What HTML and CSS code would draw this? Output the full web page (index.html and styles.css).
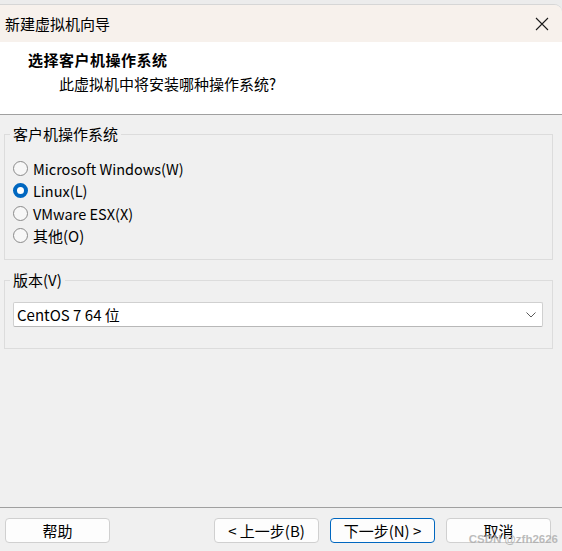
FILE: index.html
```html
<!DOCTYPE html>
<html lang="zh-CN">
<head>
<meta charset="utf-8">
<title>新建虚拟机向导</title>
<link rel="stylesheet" href="styles.css">
</head>
<body>
<div class="window">
  <div class="titlebar">
    <span class="title">新建虚拟机向导</span>
    <svg class="close" width="14" height="14" viewBox="0 0 14 14"><path d="M1 1 L13 13 M13 1 L1 13" stroke="#1b1b1b" stroke-width="1.1" fill="none"/></svg>
  </div>
  <div class="header">
    <div class="h-title">选择客户机操作系统</div>
    <div class="h-sub">此虚拟机中将安装哪种操作系统?</div>
  </div>
  <div class="content">
    <fieldset class="group group-os">
      <legend>客户机操作系统</legend>
      <div class="radio-row"><span class="radio"></span><span class="lat">Microsoft Windows(W)</span></div>
      <div class="radio-row"><span class="radio checked"></span><span class="lat">Linux(L)</span></div>
      <div class="radio-row"><span class="radio"></span><span class="lat">VMware ESX(X)</span></div>
      <div class="radio-row"><span class="radio"></span><span>其他(O)</span></div>
    </fieldset>
    <fieldset class="group group-ver">
      <legend>版本(V)</legend>
      <div class="select">
        <span>CentOS 7 64 位</span>
        <svg width="10" height="6" viewBox="0 0 10 6"><path d="M0.5 0.5 L5 5 L9.5 0.5" stroke="#5a5a5a" stroke-width="1" fill="none"/></svg>
      </div>
    </fieldset>
  </div>
  <div class="footer">
    <div class="btn">帮助</div>
    <div class="spacer"></div>
    <div class="btn">&lt; 上一步(B)</div>
    <div class="btn default">下一步(N) &gt;</div>
    <div class="btn">取消</div>
  </div>
</div>
<div class="watermark">CSDN @zfh2626</div>
</body>
</html>
```
FILE: styles.css
```css
html, body {
  margin: 0;
  padding: 0;
}
body {
  width: 562px;
  height: 551px;
  background: #ececec;
  font-family: "Noto Sans CJK SC", "Noto Sans", sans-serif;
  font-size: 15px;
  color: #000;
  position: relative;
  overflow: hidden;
}
.window {
  margin-top: 4px;
  height: 547px;
  display: flex;
  flex-direction: column;
  background: #f0f0f0;
  border-top-right-radius: 8px;
  overflow: hidden;
  border-top: 1px solid #d6d6d6;
  box-sizing: border-box;
}
.titlebar {
  height: 37px;
  flex: none;
  background: #f7f1ec;
  display: flex;
  align-items: center;
  justify-content: space-between;
  padding: 0 13px 0 5px;
}
.title {
  line-height: 20px;
}
.close {
  display: block;
}
.header {
  flex: none;
  height: 64px;
  padding-top: 8px;
  background: #fff;
  border-bottom: 1px solid #a0a0a0;
}
.h-title {
  padding-left: 28px;
  font-weight: bold;
  line-height: 20px;
  letter-spacing: 0.5px;
}
.h-sub {
  padding-left: 59px;
  margin-top: 4px;
  line-height: 20px;
}
.content {
  flex: 1;
  padding-top: 9px;
}
.group {
  margin: 0 9px 10px 4px;
  border: 1px solid #dcdcdc;
  padding: 0 9px 0 5px;
  min-width: 0;
}
.group legend {
  padding: 0 3px;
  line-height: 20px;
}
.group-os {
  padding-top: 13px;
  padding-bottom: 12px;
}
.radio-row {
  height: 22.5px;
  display: flex;
  align-items: center;
  gap: 5px;
  padding-left: 3px;
}
.lat {
  font-size: 14.5px;
}
.radio {
  width: 15px;
  height: 15px;
  box-sizing: border-box;
  border: 1px solid #8a8a8a;
  border-radius: 50%;
  background: #f7f7f7;
  flex: none;
}
.radio.checked {
  background: #fff;
  border: 4.5px solid #0067c0;
}
.group-ver {
  padding-top: 12px;
  padding-bottom: 21px;
}
.select {
  margin-left: 3px;
  height: 25px;
  box-sizing: border-box;
  background: #fff;
  border: 1px solid #d0d0d0;
  border-bottom-color: #b8b8b8;
  border-radius: 2px;
  display: flex;
  align-items: center;
  justify-content: space-between;
  padding: 0 6px 0 3px;
}
.footer {
  flex: none;
  border-top: 1px solid #a0a0a0;
  padding: 10px 11px 8px 5px;
  display: flex;
  gap: 11px;
}
.spacer {
  flex: 1;
}
.btn {
  width: 105px;
  height: 25px;
  box-sizing: border-box;
  background: #fdfdfd;
  border: 1px solid #d0d0d0;
  border-radius: 4px;
  display: flex;
  align-items: center;
  justify-content: center;
}
.btn.default {
  border-color: #0067c0;
}
.watermark {
  position: absolute;
  right: 4px;
  bottom: 6px;
  font-family: "Liberation Sans", sans-serif;
  font-size: 11.5px;
  font-weight: bold;
  color: rgba(170, 170, 170, 0.8);
}
```
